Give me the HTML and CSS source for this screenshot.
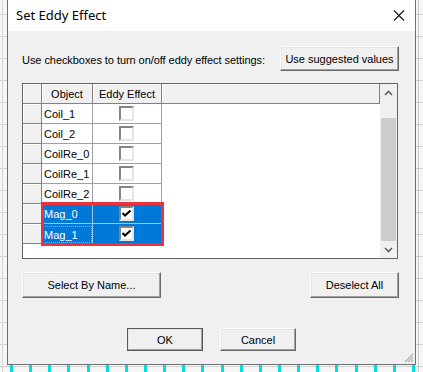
FILE: index.html
```html
<!DOCTYPE html>
<html lang="en">
<head>
    <meta charset="UTF-8">
    <meta name="viewport" content="width=device-width, initial-scale=1.0">
    <title>Set Eddy Effect</title>
    <link rel="stylesheet" href="styles.css">
</head>
<body>
    <div class="desk">
        <div class="dialog">
            <div class="titlebar">
                <span class="title">Set Eddy Effect</span>
                <svg class="close" width="12" height="11" viewBox="0 0 12 11">
                    <path d="M1 0.5 L11 10.5 M11 0.5 L1 10.5" stroke="#111" stroke-width="1.1" fill="none"/>
                </svg>
            </div>
            <div class="content">
                <div class="top-row">
                    <span class="hint">Use checkboxes to turn on/off eddy effect settings:</span>
                    <button class="btn btn-suggest">Use suggested values</button>
                </div>

                <div class="grid">
                    <div class="grid-body">
                        <div class="row head">
                            <div class="rh"></div>
                            <div class="hc obj">Object</div>
                            <div class="hc eddy">Eddy Effect</div>
                            <div class="hc filler"></div>
                        </div>
                        <div class="row">
                            <div class="rh"></div>
                            <div class="c obj">Coil_1</div>
                            <div class="c eddy"><span class="cb"></span></div>
                        </div>
                        <div class="row">
                            <div class="rh"></div>
                            <div class="c obj">Coil_2</div>
                            <div class="c eddy"><span class="cb"></span></div>
                        </div>
                        <div class="row">
                            <div class="rh"></div>
                            <div class="c obj">CoilRe_0</div>
                            <div class="c eddy"><span class="cb"></span></div>
                        </div>
                        <div class="row">
                            <div class="rh"></div>
                            <div class="c obj">CoilRe_1</div>
                            <div class="c eddy"><span class="cb"></span></div>
                        </div>
                        <div class="row">
                            <div class="rh"></div>
                            <div class="c obj">CoilRe_2</div>
                            <div class="c eddy"><span class="cb"></span></div>
                        </div>
                        <div class="row selected">
                            <div class="rh"></div>
                            <div class="c obj">Mag_0</div>
                            <div class="c eddy">
                                <span class="cb checked">
                                    <svg width="9" height="7" viewBox="0 0 9 7"><path d="M0.5 3 L3 5.5 L8.5 0.5" stroke="#000" stroke-width="2" fill="none"/></svg>
                                </span>
                            </div>
                        </div>
                        <div class="row selected">
                            <div class="rh"></div>
                            <div class="c obj"><span class="focus">Mag_1</span></div>
                            <div class="c eddy">
                                <span class="cb checked">
                                    <svg width="9" height="7" viewBox="0 0 9 7"><path d="M0.5 3 L3 5.5 L8.5 0.5" stroke="#000" stroke-width="2" fill="none"/></svg>
                                </span>
                            </div>
                        </div>
                        <div class="sel-box"></div>
                    </div>
                    <div class="scrollbar">
                        <div class="sb-arrow">
                            <svg width="9" height="6" viewBox="0 0 9 6"><path d="M1 5 L4.5 1.5 L8 5" stroke="#606060" stroke-width="1.6" fill="none"/></svg>
                        </div>
                        <div class="sb-track"><div class="sb-thumb"></div></div>
                        <div class="sb-arrow">
                            <svg width="9" height="6" viewBox="0 0 9 6"><path d="M1 1 L4.5 4.5 L8 1" stroke="#606060" stroke-width="1.6" fill="none"/></svg>
                        </div>
                    </div>
                </div>

                <div class="btn-row">
                    <button class="btn btn-select">Select By Name...</button>
                    <button class="btn btn-deselect">Deselect All</button>
                </div>

                <div class="footer">
                    <button class="btn btn-default">OK</button>
                    <button class="btn">Cancel</button>
                </div>

                <svg class="grip" width="10" height="10" viewBox="0 0 10 10">
                    <path d="M9 1 L1 9 M9 4 L4 9 M9 7 L7 9" stroke="#b4b4b4" stroke-width="1.2" fill="none"/>
                </svg>
            </div>
        </div>
        <div class="marks">
            <span></span><span></span><span></span><span></span><span></span><span></span>
            <span></span><span></span><span></span><span></span><span></span><span></span>
            <span></span><span></span><span></span><span></span><span></span><span></span>
            <span></span><span></span><span></span><span></span>
        </div>
    </div>
</body>
</html>
```

FILE: styles.css
```css
body {
    margin: 0;
    width: 423px;
    height: 372px;
    overflow: hidden;
    font-family: 'Liberation Sans', Arial, sans-serif;
    font-size: 11px;
    color: #000;
    background:
        linear-gradient(to right, transparent 2px, #d6d6d6 2px 3px, transparent 3px 418px, #c8c8c8 418px 419px, transparent 419px),
        repeating-linear-gradient(to bottom, transparent 0 14px, #d2d2d2 14px 15px, transparent 15px 22px),
        #f6f6f6;
}
.desk {
    display: flex;
    flex-direction: column;
    padding-left: 7px;
}
.dialog {
    width: 407px;
    height: 364px;
    border: 1px solid #6e6e6e;
    border-top: none;
    background: #f0f0f0;
    display: flex;
    flex-direction: column;
}
.titlebar {
    height: 31px;
    background: #fff;
    display: flex;
    align-items: center;
    justify-content: space-between;
    padding: 0 9px 0 8px;
    flex-shrink: 0;
}
.title {
    font-family: 'Noto Sans', 'Open Sans', sans-serif;
    font-size: 13px;
    color: #000;
    margin-top: -1px;
}
.close {
    margin-right: 1px;
}
.content {
    position: relative;
    flex: 1;
    padding: 15px 16px 0 14px;
    display: flex;
    flex-direction: column;
}
.top-row {
    display: flex;
    justify-content: space-between;
    align-items: center;
    height: 25px;
}
.hint {
    padding-top: 2px;
    letter-spacing: -0.06px;
}
.btn {
    font-family: 'Liberation Sans', Arial, sans-serif;
    font-size: 11px;
    color: #000;
    background: #f0f0f0;
    border: 1px solid;
    border-color: #fff #696969 #696969 #fff;
    box-shadow: inset -1px -1px 0 #a0a0a0, inset 1px 1px 0 #e3e3e3;
    padding: 0;
    width: 76px;
    height: 23px;
}
.btn-suggest {
    width: 119px;
    height: 25px;
}
.grid {
    margin-top: 12px;
    margin-right: 1px;
    height: 174px;
    border: 1px solid #646464;
    background: #fff;
    display: flex;
}
.grid-body {
    position: relative;
    flex: 1;
}
.row {
    display: flex;
    height: 20px;
}
.rh {
    width: 19px;
    height: 20px;
    box-sizing: border-box;
    background: #f0f0f0;
    border-right: 1px solid #808080;
    border-bottom: 1px solid #808080;
    box-shadow: inset 1px 1px 0 #fff;
    flex-shrink: 0;
}
.hc {
    height: 20px;
    box-sizing: border-box;
    background: #f0f0f0;
    border-right: 1px solid #808080;
    border-bottom: 1px solid #808080;
    box-shadow: inset 1px 1px 0 #fff;
    display: flex;
    align-items: center;
    justify-content: center;
    padding-top: 1px;
}
.obj {
    width: 51px;
    flex-shrink: 0;
}
.eddy {
    width: 69px;
    flex-shrink: 0;
}
.filler {
    flex: 1;
}
.c {
    height: 20px;
    box-sizing: border-box;
    border-right: 1px solid #a0a0a0;
    border-bottom: 1px solid #a0a0a0;
    display: flex;
    align-items: center;
}
.c.obj {
    padding-left: 2px;
    padding-top: 1px;
}
.c.eddy {
    justify-content: center;
    padding-right: 1px;
}
.cb {
    width: 15px;
    height: 15px;
    box-sizing: border-box;
    background: #fff;
    border: 2px solid;
    border-color: #848484 #e4e4e4 #e4e4e4 #848484;
    display: flex;
    align-items: center;
    justify-content: center;
}
.selected .c {
    background: #0078d7;
    color: #fff;
    border-color: #9ec6ea;
}
.focus {
    border: 1px dotted #e8a040;
    padding: 1px 2px 0 1px;
    margin-left: -2px;
    width: 46px;
    height: 14px;
    line-height: 14px;
}
.sel-box {
    position: absolute;
    left: 18px;
    top: 118px;
    width: 123px;
    height: 44px;
    box-sizing: border-box;
    border: 3px solid #ec323c;
}
.scrollbar {
    width: 17px;
    background: #f0f0f0;
    display: flex;
    flex-direction: column;
}
.sb-arrow {
    height: 17px;
    display: flex;
    align-items: center;
    justify-content: center;
}
.sb-track {
    flex: 1;
    display: flex;
    flex-direction: column;
    justify-content: flex-end;
    padding: 0 1px;
}
.sb-thumb {
    height: 123px;
    background: #cdcdcd;
}
.btn-row {
    margin-top: 13px;
    display: flex;
    justify-content: space-between;
}
.btn-select {
    width: 139px;
    height: 26px;
}
.btn-deselect {
    width: 89px;
    height: 26px;
}
.footer {
    margin-top: 30px;
    display: flex;
    justify-content: center;
    gap: 17px;
    padding-left: 2px;
}
.btn-default {
    outline: 1px solid #5a5a5a;
    outline-offset: -1px;
    border-color: #fff #5a5a5a #5a5a5a #fff;
}
.grip {
    position: absolute;
    right: 1px;
    bottom: 1px;
}
.marks {
    height: 8px;
    display: flex;
    justify-content: space-between;
    padding: 0 8px 0 3px;
}
.marks span {
    width: 3px;
    height: 8px;
    background: #00dede;
}
```
